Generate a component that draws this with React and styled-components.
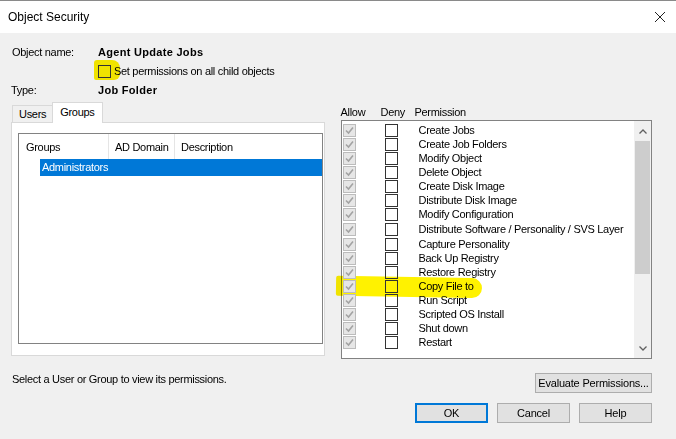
import React from 'react'
import styled, { createGlobalStyle } from 'styled-components';

const GlobalStyle = createGlobalStyle`
    html, body {
        margin: 0;
        padding: 0;
        background: #f0f0f0;
    }
    * {
        box-sizing: border-box;
    }
`;

const Window = styled.div`
    width: 676px;
    height: 439px;
    background: #f0f0f0;
    font-family: "Liberation Sans", Arial, sans-serif;
    font-size: 11px;
    letter-spacing: -0.3px;
    color: #000;
    overflow: hidden;
    white-space: nowrap;
`;

const TitleBar = styled.div`
    height: 33px;
    background: #fff;
    border-top: 1px solid #8a8a8a;
    display: flex;
    align-items: center;
    justify-content: space-between;
    padding: 0 10px 0 8px;
    font-size: 12px;
    letter-spacing: 0;
`;

const CloseIcon = styled.svg`
    width: 12px;
    height: 12px;
`;

const Body = styled.div`
    padding: 10px 24px 0 11px;
`;

const InfoGrid = styled.div`
    display: grid;
    grid-template-columns: 87px 1fr;
    align-items: center;
`;

const Label = styled.div`
    height: 18px;
    line-height: 18px;
    padding-left: ${p => p.indent || 0}px;
`;

const Value = styled.div`
    height: 18px;
    line-height: 18px;
    font-weight: bold;
    letter-spacing: 0.3px;
`;

const CheckRow = styled.label`
    grid-column: 2;
    display: flex;
    align-items: center;
    gap: 3px;
    height: 20px;
    position: relative;
`;

const Highlight = styled.span`
    position: absolute;
    background: #fff200;
    mix-blend-mode: multiply;
    pointer-events: none;
`;

const Box = styled.span`
    position: relative;
    width: 13px;
    height: 13px;
    border: 1px solid ${p => p.disabled ? '#bcbcbc' : '#333'};
    background: ${p => p.disabled ? '#e6e6e6' : 'transparent'};
    display: inline-flex;
    align-items: center;
    justify-content: center;
    flex-shrink: 0;
`;

const MainRow = styled.div`
    display: flex;
    align-items: flex-start;
    margin-top: 4px;
`;

const LeftColumn = styled.div`
    width: 314px;
`;

const TabStrip = styled.div`
    display: flex;
    align-items: flex-end;
    height: 20px;
    padding-left: 1px;
    position: relative;
    z-index: 1;
`;

const Tab = styled.div`
    height: ${p => p.active ? 21 : 18}px;
    padding: 0 ${p => p.active ? 7 : 6}px;
    border: 1px solid #d9d9d9;
    border-bottom: ${p => p.active ? 'none' : '1px solid #d9d9d9'};
    background: ${p => p.active ? '#fff' : '#f0f0f0'};
    margin-left: ${p => p.active ? -1 : 0}px;
    line-height: ${p => p.active ? 18 : 17}px;
`;

const TabPanel = styled.div`
    height: 234px;
    margin-top: -1px;
    background: #fff;
    border: 1px solid #d9d9d9;
    padding: 10px 1px 0 6px;
`;

const ListBox = styled.div`
    height: 211px;
    border: 1px solid #828282;
    background: #fff;
`;

const HeaderRow = styled.div`
    display: flex;
    height: 25px;
    align-items: stretch;
`;

const HeaderCell = styled.div`
    width: ${p => p.w}px;
    padding-left: ${p => p.pad}px;
    display: flex;
    align-items: center;
    border-right: ${p => p.last ? 'none' : '1px solid #e5e5e5'};
`;

const SelectedRow = styled.div`
    margin-left: 21px;
    height: 17px;
    line-height: 17px;
    background: #0078d7;
    color: #fff;
    padding-left: 2px;
`;

const RightColumn = styled.div`
    width: 312px;
    margin-left: 16px;
`;

const PermHeader = styled.div`
    display: flex;
    height: 17px;
    align-items: center;
    padding-top: 1px;
`;

const PermHeadCell = styled.div`
    width: ${p => p.w}px;
`;

const PermList = styled.div`
    height: 239px;
    border: 1px solid #828282;
    background: #fff;
    display: flex;
`;

const PermRows = styled.div`
    flex: 1;
    padding-top: 2px;
    position: relative;
`;

const PermRow = styled.div`
    display: flex;
    align-items: center;
    height: ${p => p.tall ? 16 : 14}px;
`;

const AllowCell = styled.div`
    width: 43px;
    padding-left: 1px;
    display: flex;
    align-items: center;
`;

const DenyCell = styled.div`
    width: 34px;
    display: flex;
    align-items: center;
`;

const Scrollbar = styled.div`
    width: 17px;
    background: #f0f0f0;
    display: flex;
    flex-direction: column;
    align-items: center;
`;

const ScrollArrow = styled.div`
    height: ${p => p.h}px;
    width: 100%;
    display: flex;
    align-items: center;
    justify-content: center;
`;

const Thumb = styled.div`
    width: 15px;
    height: 133px;
    background: #cdcdcd;
`;

const Spacer = styled.div`
    flex: 1;
`;

const BottomRow = styled.div`
    display: flex;
    justify-content: space-between;
    align-items: flex-start;
    margin-top: 14px;
`;

const Status = styled.div`
    margin-top: -1px;
    line-height: 14px;
    padding-left: 1px;
`;

const ButtonColumn = styled.div`
    display: flex;
    flex-direction: column;
    align-items: flex-end;
    gap: 10px;
`;

const ButtonGroup = styled.div`
    display: flex;
    gap: 9px;
`;

const Button = styled.button`
    width: ${p => p.w || 73}px;
    height: 20px;
    background: #e1e1e1;
    border: ${p => p.primary ? '2px solid #0078d7' : '1px solid #adadad'};
    font-family: inherit;
    font-size: 11px;
    letter-spacing: -0.2px;
    white-space: nowrap;
    color: #000;
    padding: 0;
`;

const permissions = [
    'Create Jobs',
    'Create Job Folders',
    'Modify Object',
    'Delete Object',
    'Create Disk Image',
    'Distribute Disk Image',
    'Modify Configuration',
    'Distribute Software / Personality / SVS Layer',
    'Capture Personality',
    'Back Up Registry',
    'Restore Registry',
    'Copy File to',
    'Run Script',
    'Scripted OS Install',
    'Shut down',
    'Restart',
];

const Tick = () => (
    <svg width="9" height="9" viewBox="0 0 9 9">
        <path d="M1 4.5 L3.5 7 L8 1.5" fill="none" stroke="#a3a3a3" strokeWidth="1.6" />
    </svg>
);

function App() {
    return (
        <Window>
            <GlobalStyle />
            <TitleBar>
                <span>Object Security</span>
                <CloseIcon viewBox="0 0 12 12">
                    <path d="M1 1 L11 11 M11 1 L1 11" stroke="#222" strokeWidth="1" />
                </CloseIcon>
            </TitleBar>
            <Body>
                <InfoGrid>
                    <Label indent={1}>Object name:</Label>
                    <Value>Agent Update Jobs</Value>
                    <CheckRow>
                        <Highlight style={{ left: -4, top: -1, width: 26, height: 20, borderRadius: '3px 8px 6px 2px' }} />
                        <Box />
                        <span>Set permissions on all child objects</span>
                    </CheckRow>
                    <Label indent={-2}>Type:</Label>
                    <Value>Job Folder</Value>
                </InfoGrid>

                <MainRow>
                    <LeftColumn>
                        <TabStrip>
                            <Tab>Users</Tab>
                            <Tab active>Groups</Tab>
                        </TabStrip>
                        <TabPanel>
                            <ListBox>
                                <HeaderRow>
                                    <HeaderCell w={90} pad={7}>Groups</HeaderCell>
                                    <HeaderCell w={66} pad={6}>AD Domain</HeaderCell>
                                    <HeaderCell w={140} pad={6} last>Description</HeaderCell>
                                </HeaderRow>
                                <SelectedRow>Administrators</SelectedRow>
                            </ListBox>
                        </TabPanel>
                    </LeftColumn>

                    <RightColumn>
                        <PermHeader>
                            <PermHeadCell w={40}>Allow</PermHeadCell>
                            <PermHeadCell w={34}>Deny</PermHeadCell>
                            <PermHeadCell w={100}>Permission</PermHeadCell>
                        </PermHeader>
                        <PermList>
                            <PermRows>
                                <Highlight style={{ left: -6, top: 156, width: 146, height: 20, borderRadius: '2px 10px 10px 2px', transform: 'rotate(1deg)' }} />
                                {permissions.map((name, i) => (
                                    <PermRow key={name} tall={i === 7}>
                                        <AllowCell>
                                            <Box disabled><Tick /></Box>
                                        </AllowCell>
                                        <DenyCell>
                                            <Box />
                                        </DenyCell>
                                        <span>{name}</span>
                                    </PermRow>
                                ))}
                            </PermRows>
                            <Scrollbar>
                                <ScrollArrow h={20}>
                                    <svg width="8" height="5" viewBox="0 0 8 5">
                                        <path d="M0.5 4.5 L4 1 L7.5 4.5" fill="none" stroke="#606060" strokeWidth="1.3" />
                                    </svg>
                                </ScrollArrow>
                                <Thumb />
                                <Spacer />
                                <ScrollArrow h={20}>
                                    <svg width="8" height="5" viewBox="0 0 8 5">
                                        <path d="M0.5 0.5 L4 4 L7.5 0.5" fill="none" stroke="#606060" strokeWidth="1.3" />
                                    </svg>
                                </ScrollArrow>
                            </Scrollbar>
                        </PermList>
                    </RightColumn>
                </MainRow>

                <BottomRow>
                    <Status>Select a User or Group to view its permissions.</Status>
                    <ButtonColumn>
                        <Button w={117}>Evaluate Permissions...</Button>
                        <ButtonGroup>
                            <Button primary>OK</Button>
                            <Button>Cancel</Button>
                            <Button>Help</Button>
                        </ButtonGroup>
                    </ButtonColumn>
                </BottomRow>
            </Body>
        </Window>
    )
}

export default App
